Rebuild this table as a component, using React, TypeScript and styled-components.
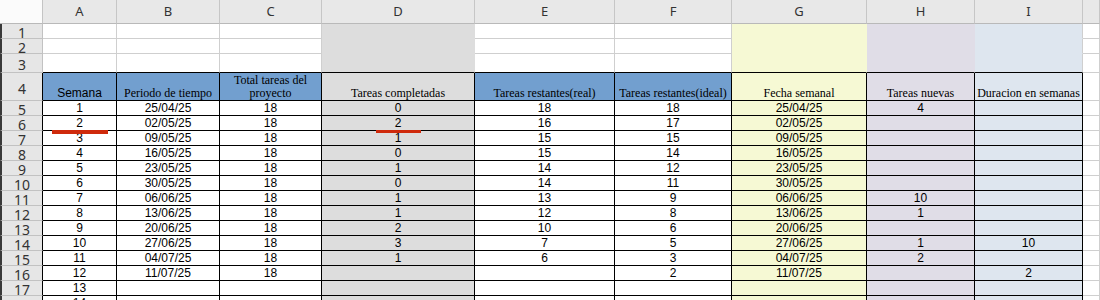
import React from "react";
import styled, { createGlobalStyle } from "styled-components";

/* Styles */
const GlobalStyle = createGlobalStyle`
  html, body {
    margin: 0;
    padding: 0;
    background: #ffffff;
    overflow: hidden;
  }
`;

const GRID = "#cfcfcf";
const INK = "#000000";
const BLUE = "#729fcf";

const Frame = styled.div`
  position: relative;
  width: 1100px;
  height: 300px;
  overflow: hidden;
`;

const Sheet = styled.div`
  display: grid;
  grid-template-columns: 43px 74px 103px 102px 153px 140px 117px 135px 108px 108px 1fr;
  grid-template-rows: 24px 15px 15px 19px 28px repeat(14, 15px);
`;

const Corner = styled.div`
  box-sizing: border-box;
  background: #fbfbfb;
  border-right: 1px solid #c4c4c4;
  border-bottom: 1px solid #b9b9b9;
`;

const ColHead = styled.div`
  box-sizing: border-box;
  display: flex;
  align-items: center;
  justify-content: center;
  background: #e8e8e8;
  border-right: 1px solid #c6c6c6;
  border-bottom: 1px solid #b9b9b9;
  font-family: "Noto Sans", "Open Sans", sans-serif;
  font-size: 13px;
  line-height: 23px;
  color: #333333;
`;

const RowHead = styled.div<{ $edge: string }>`
  box-sizing: border-box;
  display: flex;
  justify-content: center;
  align-items: center;
  padding-top: 3px;
  background: #e6e6e6;
  border-left: 2px solid #3a3a3a;
  border-right: 1px solid ${(p) => p.$edge};
  border-bottom: 1px solid #c2c2c2;
  font-family: "Noto Sans", "Open Sans", sans-serif;
  font-size: 14px;
  line-height: 11px;
  color: #333333;
  overflow: hidden;
`;

const Cell = styled.div<{
  $fill: string;
  $edge: string;
  $under: string;
  $serif?: boolean;
  $wrap?: boolean;
}>`
  box-sizing: border-box;
  display: flex;
  align-items: flex-end;
  justify-content: center;
  padding: 0 2px;
  background: ${(p) => p.$fill};
  border-right: 1px solid ${(p) => p.$edge};
  border-bottom: 1px solid ${(p) => p.$under};
  font-family: ${(p) =>
    p.$serif
      ? `"Liberation Serif", "Times New Roman", serif`
      : `"Liberation Sans", Arial, sans-serif`};
  font-size: 12px;
  line-height: ${(p) => (p.$wrap ? "13px" : "14px")};
  color: #000000;
  text-align: center;
  white-space: ${(p) => (p.$wrap ? "normal" : "nowrap")};
  overflow: hidden;
`;

const Mark = styled.div<{ $left: number; $top: number; $width: number; $thick: number }>`
  position: absolute;
  left: ${(p) => p.$left}px;
  top: ${(p) => p.$top}px;
  width: ${(p) => p.$width}px;
  height: ${(p) => p.$thick}px;
  background: #cf2a0c;
`;

/* Data */
interface Column {
  key: string;
  fill: string;
  head: string;
  title: string;
  serif: boolean;
  wrap?: boolean;
}

const COLUMNS: Column[] = [
  { key: "A", fill: "#ffffff", head: BLUE, title: "Semana", serif: false },
  { key: "B", fill: "#ffffff", head: BLUE, title: "Periodo de tiempo", serif: true },
  { key: "C", fill: "#ffffff", head: BLUE, title: "Total tareas del proyecto", serif: true, wrap: true },
  { key: "D", fill: "#dddddd", head: "#dddddd", title: "Tareas completadas", serif: true },
  { key: "E", fill: "#ffffff", head: BLUE, title: "Tareas restantes(real)", serif: true },
  { key: "F", fill: "#ffffff", head: BLUE, title: "Tareas restantes(ideal)", serif: true },
  { key: "G", fill: "#f6f9d4", head: "#f6f9d4", title: "Fecha semanal", serif: true },
  { key: "H", fill: "#e0dde7", head: "#e0dde7", title: "Tareas nuevas", serif: true },
  { key: "I", fill: "#dee6ef", head: "#dee6ef", title: "Duracion en semanas", serif: true },
];

const ROWS: string[][] = [
  ["1", "25/04/25", "18", "0", "18", "18", "25/04/25", "4", ""],
  ["2", "02/05/25", "18", "2", "16", "17", "02/05/25", "", ""],
  ["3", "09/05/25", "18", "1", "15", "15", "09/05/25", "", ""],
  ["4", "16/05/25", "18", "0", "15", "14", "16/05/25", "", ""],
  ["5", "23/05/25", "18", "1", "14", "12", "23/05/25", "", ""],
  ["6", "30/05/25", "18", "0", "14", "11", "30/05/25", "", ""],
  ["7", "06/06/25", "18", "1", "13", "9", "06/06/25", "10", ""],
  ["8", "13/06/25", "18", "1", "12", "8", "13/06/25", "1", ""],
  ["9", "20/06/25", "18", "2", "10", "6", "20/06/25", "", ""],
  ["10", "27/06/25", "18", "3", "7", "5", "27/06/25", "1", "10"],
  ["11", "04/07/25", "18", "1", "6", "3", "04/07/25", "2", ""],
  ["12", "11/07/25", "18", "", "", "2", "11/07/25", "", "2"],
  ["13", "", "", "", "", "", "", "", ""],
  ["14", "", "", "", "", "", "", "", ""],
];

const isWhite = (c: Column) => c.fill === "#ffffff";

const App: React.FC = () => {
  const cells: React.ReactNode[] = [];

  // column letters (J is cut off at the window edge)
  cells.push(<Corner key="corner" />);
  COLUMNS.forEach((c) => cells.push(<ColHead key={`h-${c.key}`}>{c.key}</ColHead>));
  cells.push(<ColHead key="h-J" />);

  // empty rows 1-3
  [1, 2, 3].forEach((r) => {
    cells.push(
      <RowHead key={`r-${r}`} $edge="#c2c2c2">
        {r}
      </RowHead>
    );
    COLUMNS.forEach((c, i) => {
      const next = COLUMNS[i + 1];
      const edge = isWhite(c) ? GRID : next ? c.fill : GRID;
      const under = r === 3 ? INK : isWhite(c) ? GRID : c.fill;
      cells.push(<Cell key={`${c.key}${r}`} $fill={c.fill} $edge={edge} $under={under} />);
    });
    cells.push(<Cell key={`J${r}`} $fill="#ffffff" $edge={GRID} $under={GRID} />);
  });

  // header row 4
  cells.push(
    <RowHead key="r-4" $edge={INK}>
      4
    </RowHead>
  );
  COLUMNS.forEach((c) =>
    cells.push(
      <Cell key={`${c.key}4`} $fill={c.head} $edge={INK} $under={INK} $serif={c.serif} $wrap={c.wrap}>
        {c.title}
      </Cell>
    )
  );
  cells.push(<Cell key="J4" $fill="#ffffff" $edge={GRID} $under={GRID} />);

  // data rows 5-18
  ROWS.forEach((row, ri) => {
    const r = ri + 5;
    cells.push(
      <RowHead key={`r-${r}`} $edge={INK}>
        {r}
      </RowHead>
    );
    COLUMNS.forEach((c, ci) =>
      cells.push(
        <Cell key={`${c.key}${r}`} $fill={c.fill} $edge={INK} $under={INK}>
          {row[ci]}
        </Cell>
      )
    );
    cells.push(<Cell key={`J${r}`} $fill="#ffffff" $edge={GRID} $under={GRID} />);
  });

  return (
    <Frame>
      <GlobalStyle />
      <Sheet>{cells}</Sheet>
      <Mark $left={52} $top={130} $width={56} $thick={4} />
      <Mark $left={376} $top={130} $width={45} $thick={3} />
    </Frame>
  );
};

export default App;
